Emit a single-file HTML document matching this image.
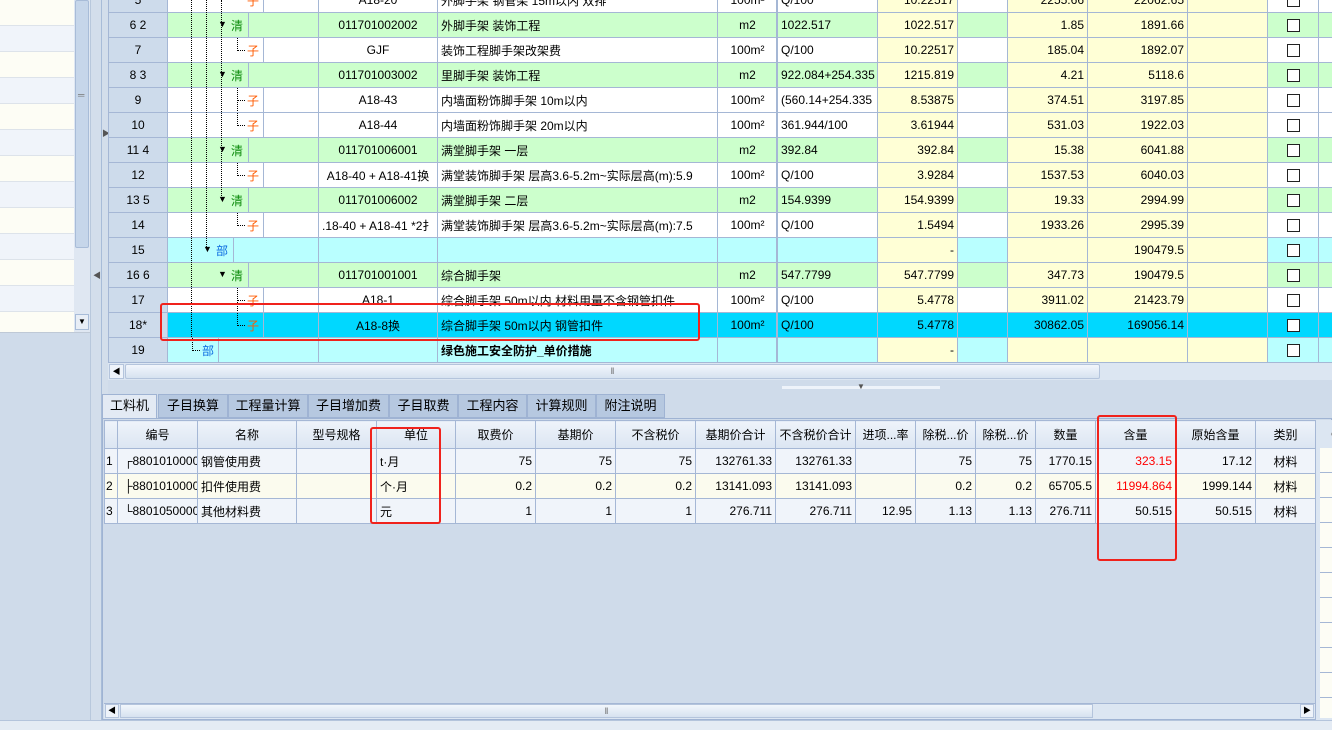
<!DOCTYPE html>
<html><head><meta charset="utf-8">
<style>
*{box-sizing:border-box;margin:0;padding:0}
body{width:1332px;height:730px;overflow:hidden;background:#cfdbea;font-family:"Liberation Sans","Noto Sans CJK SC",sans-serif;font-size:12px;color:#000;position:relative}
.abs{position:absolute}
table{border-collapse:collapse;table-layout:fixed}
td{padding:0 3px;border:1px solid #a5b7d5;height:25px;white-space:nowrap;overflow:hidden;font-size:12px}
#top{position:absolute;left:108px;top:-13px;width:1230px}
#top td.h{background:#cddbeb;text-align:center}
tr.g td{background:#ccffcc}
tr.w td{background:#fff}
tr.c td{background:#b9ffff}
tr.s td{background:#00d8ff}
tr td.y{background:#ffffd6}
tr.s td.y{background:#00d8ff}
td.r{text-align:right}
td.m{text-align:center}
td.t{position:relative;padding:0}
.dv{position:absolute;top:0;bottom:0;border-right:1px solid #a5b7d5}
.q{position:absolute;top:4px;color:#0a8a0a}
.z{position:absolute;top:4px;color:#ff5a00}
.b{position:absolute;top:4px;color:#0a6ae0}
.ar{position:absolute;top:6px;font-size:9px;color:#000}
.lk{position:absolute;top:0;height:13px;width:8px;border-left:1px dotted #000;border-bottom:1px dotted #000}
.cb{display:inline-block;width:13px;height:13px;border:1px solid #222;background:#fff;vertical-align:middle}
.vl{position:absolute;border-left:1px dotted #000;width:0}
#bot{position:absolute;left:104px;top:420px;width:1211px}
#bot td{background:#f0f4fa;height:25px}
#bot tr.hd td{height:28px;background:linear-gradient(#eef3fa,#dbe5f2);text-align:center}
#bot tr.k td{background:#fbfbee}
.tab{position:absolute;top:394px;height:24px;background:#b6c8e0;border:1px solid #9fb3d3;text-align:center;line-height:22px;font-size:13px}
.red{position:absolute;border:2px solid #f0221c;border-radius:3px}
</style></head><body>
<div class="abs" style="left:0;top:0;width:74px;height:332px;background:repeating-linear-gradient(#fdfdf5 0 25px,#dde3ea 25px 26px,#f0f4fa 26px 51px,#dde3ea 51px 52px)"></div>
<div class="abs" style="left:74px;top:0;width:16px;height:332px;background:#dfe7f2"></div>
<div class="abs" style="left:75px;top:0;width:14px;height:248px;background:#c6d6ea;border:1px solid #a8bcd8;border-radius:2px"></div>
<div class="abs" style="left:78px;top:90px;font-size:9px;color:#777">═</div>
<div class="abs" style="left:75px;top:314px;width:14px;height:16px;background:#e8eef6;border:1px solid #a8bcd8;font-size:8px;text-align:center;line-height:14px">▼</div>
<div class="abs" style="left:0;top:332px;width:90px;height:390px;background:#cfdbea;border-top:1px solid #bfc9d6"></div>
<div class="abs" style="left:90px;top:0;width:18px;height:720px;background:#d3deeb;border-left:1px solid #b8c8dc"></div>
<div class="abs" style="left:101px;top:0;width:1px;height:720px;background:#a8bcd8"></div>
<div class="abs" style="left:102px;top:128px;font-size:8px;color:#555">▶</div>
<div class="abs" style="left:93px;top:270px;font-size:8px;color:#555">◀</div>

<table id="top">
<colgroup><col style="width:59px"><col style="width:151px"><col style="width:119px"><col style="width:280px"><col style="width:60px"><col style="width:100px"><col style="width:80px"><col style="width:50px"><col style="width:80px"><col style="width:100px"><col style="width:80px"><col style="width:51px"><col style="width:20px"></colgroup>
<tr class="w"><td class="h">5</td><td class="t"><div class="dv" style="left:0;width:96px"></div><span class="z" style="left:79px">子</span></td><td class="m">A18-20</td><td>外脚手架 钢管架 15m以内 双排</td><td class="m">100m²</td><td>Q/100</td><td class="r y">10.22517</td><td></td><td class="r y">2255.66</td><td class="r y">22062.65</td><td class="y"></td><td class="m"><span class="cb"></span></td><td></td></tr>
<tr class="g"><td class="h">6 2</td><td class="t"><div class="dv" style="left:0;width:81px"></div><span class="ar" style="left:50px">▼</span><span class="q" style="left:63px">清</span></td><td class="m">011701002002</td><td>外脚手架 装饰工程</td><td class="m">m2</td><td>1022.517</td><td class="r y">1022.517</td><td></td><td class="r y">1.85</td><td class="r y">1891.66</td><td class="y"></td><td class="m"><span class="cb"></span></td><td></td></tr>
<tr class="w"><td class="h">7</td><td class="t"><div class="dv" style="left:0;width:96px"></div><div class="lk" style="left:69px"></div><span class="z" style="left:79px">子</span></td><td class="m">GJF</td><td>装饰工程脚手架改架费</td><td class="m">100m²</td><td>Q/100</td><td class="r y">10.22517</td><td></td><td class="r y">185.04</td><td class="r y">1892.07</td><td class="y"></td><td class="m"><span class="cb"></span></td><td></td></tr>
<tr class="g"><td class="h">8 3</td><td class="t"><div class="dv" style="left:0;width:81px"></div><span class="ar" style="left:50px">▼</span><span class="q" style="left:63px">清</span></td><td class="m">011701003002</td><td>里脚手架 装饰工程</td><td class="m">m2</td><td>922.084+254.335</td><td class="r y">1215.819</td><td></td><td class="r y">4.21</td><td class="r y">5118.6</td><td class="y"></td><td class="m"><span class="cb"></span></td><td></td></tr>
<tr class="w"><td class="h">9</td><td class="t"><div class="dv" style="left:0;width:96px"></div><div class="lk" style="left:69px;height:25px;border-bottom:none"></div><div class="lk" style="left:69px;border-left:none"></div><span class="z" style="left:79px">子</span></td><td class="m">A18-43</td><td>内墙面粉饰脚手架 10m以内</td><td class="m">100m²</td><td>(560.14+254.335</td><td class="r y">8.53875</td><td></td><td class="r y">374.51</td><td class="r y">3197.85</td><td class="y"></td><td class="m"><span class="cb"></span></td><td></td></tr>
<tr class="w"><td class="h">10</td><td class="t"><div class="dv" style="left:0;width:96px"></div><div class="lk" style="left:69px"></div><span class="z" style="left:79px">子</span></td><td class="m">A18-44</td><td>内墙面粉饰脚手架 20m以内</td><td class="m">100m²</td><td>361.944/100</td><td class="r y">3.61944</td><td></td><td class="r y">531.03</td><td class="r y">1922.03</td><td class="y"></td><td class="m"><span class="cb"></span></td><td></td></tr>
<tr class="g"><td class="h">11 4</td><td class="t"><div class="dv" style="left:0;width:81px"></div><span class="ar" style="left:50px">▼</span><span class="q" style="left:63px">清</span></td><td class="m">011701006001</td><td>满堂脚手架 一层</td><td class="m">m2</td><td>392.84</td><td class="r y">392.84</td><td></td><td class="r y">15.38</td><td class="r y">6041.88</td><td class="y"></td><td class="m"><span class="cb"></span></td><td></td></tr>
<tr class="w"><td class="h">12</td><td class="t"><div class="dv" style="left:0;width:96px"></div><div class="lk" style="left:69px"></div><span class="z" style="left:79px">子</span></td><td class="m">A18-40 + A18-41换</td><td>满堂装饰脚手架 层高3.6-5.2m~实际层高(m):5.9</td><td class="m">100m²</td><td>Q/100</td><td class="r y">3.9284</td><td></td><td class="r y">1537.53</td><td class="r y">6040.03</td><td class="y"></td><td class="m"><span class="cb"></span></td><td></td></tr>
<tr class="g"><td class="h">13 5</td><td class="t"><div class="dv" style="left:0;width:81px"></div><span class="ar" style="left:50px">▼</span><span class="q" style="left:63px">清</span></td><td class="m">011701006002</td><td>满堂脚手架 二层</td><td class="m">m2</td><td>154.9399</td><td class="r y">154.9399</td><td></td><td class="r y">19.33</td><td class="r y">2994.99</td><td class="y"></td><td class="m"><span class="cb"></span></td><td></td></tr>
<tr class="w"><td class="h">14</td><td class="t"><div class="dv" style="left:0;width:96px"></div><div class="lk" style="left:69px"></div><span class="z" style="left:79px">子</span></td><td class="m">.18-40 + A18-41 *2扌</td><td>满堂装饰脚手架 层高3.6-5.2m~实际层高(m):7.5</td><td class="m">100m²</td><td>Q/100</td><td class="r y">1.5494</td><td></td><td class="r y">1933.26</td><td class="r y">2995.39</td><td class="y"></td><td class="m"><span class="cb"></span></td><td></td></tr>
<tr class="c"><td class="h">15</td><td class="t"><div class="dv" style="left:0;width:66px"></div><span class="ar" style="left:35px">▼</span><span class="b" style="left:48px">部</span></td><td></td><td></td><td></td><td></td><td class="r y">-</td><td></td><td class="y"></td><td class="r y">190479.5</td><td class="y"></td><td class="m"><span class="cb"></span></td><td></td></tr>
<tr class="g"><td class="h">16 6</td><td class="t"><div class="dv" style="left:0;width:81px"></div><span class="ar" style="left:50px">▼</span><span class="q" style="left:63px">清</span></td><td class="m">011701001001</td><td>综合脚手架</td><td class="m">m2</td><td>547.7799</td><td class="r y">547.7799</td><td></td><td class="r y">347.73</td><td class="r y">190479.5</td><td class="y"></td><td class="m"><span class="cb"></span></td><td></td></tr>
<tr class="w"><td class="h">17</td><td class="t"><div class="dv" style="left:0;width:96px"></div><div class="lk" style="left:69px;height:25px;border-bottom:none"></div><div class="lk" style="left:69px;border-left:none"></div><span class="z" style="left:79px">子</span></td><td class="m">A18-1</td><td>综合脚手架 50m以内 材料用量不含钢管扣件</td><td class="m">100m²</td><td>Q/100</td><td class="r y">5.4778</td><td></td><td class="r y">3911.02</td><td class="r y">21423.79</td><td class="y"></td><td class="m"><span class="cb"></span></td><td></td></tr>
<tr class="s"><td class="h">18*</td><td class="t"><div class="dv" style="left:0;width:96px"></div><div class="lk" style="left:69px"></div><span class="z" style="left:79px">子</span></td><td class="m">A18-8换</td><td>综合脚手架 50m以内 钢管扣件</td><td class="m">100m²</td><td>Q/100</td><td class="r y">5.4778</td><td></td><td class="r y">30862.05</td><td class="r y">169056.14</td><td class="y"></td><td class="m"><span class="cb"></span></td><td></td></tr>
<tr class="c"><td class="h">19</td><td class="t"><div class="dv" style="left:0;width:51px"></div><div class="lk" style="left:24px"></div><span class="b" style="left:34px">部</span></td><td></td><td style="font-weight:bold">绿色施工安全防护_单价措施</td><td></td><td></td><td class="r y">-</td><td></td><td class="y"></td><td class="y"></td><td class="y"></td><td class="m"><span class="cb"></span></td><td></td></tr>
</table>
<div class="vl" style="left:191px;top:0;height:337px"></div>
<div class="vl" style="left:206px;top:0;height:249px"></div>
<div class="vl" style="left:221px;top:0;height:200px"></div>
<div class="abs" style="left:776px;top:0;width:2px;height:362px;background:#a5b7d5"></div>
<div class="abs" style="left:108px;top:362px;width:1224px;height:18px;background:#dce6f2;border-top:1px solid #a5b7d5"></div>
<div class="abs" style="left:109px;top:364px;width:15px;height:15px;background:#eef3fa;border:1px solid #b4c4dc;font-size:8px;text-align:center;line-height:13px">◀</div>
<div class="abs" style="left:125px;top:364px;width:975px;height:15px;background:linear-gradient(#f2f6fc,#d6e2f0);border:1px solid #b4c4dc;border-radius:2px;text-align:center;font-size:9px;line-height:13px;color:#666">‖</div>
<div class="abs" style="left:782px;top:386px;width:158px;height:3px;background:#eef3fa"></div>
<div class="abs" style="left:857px;top:382px;font-size:8px;color:#555">▼</div>
<div class="tab" style="left:102px;width:55px;background:#e3eaf4;border-bottom:none">工料机</div>
<div class="tab" style="left:158px;width:70px">子目换算</div>
<div class="tab" style="left:228px;width:80px">工程量计算</div>
<div class="tab" style="left:308px;width:81px">子目增加费</div>
<div class="tab" style="left:389px;width:69px">子目取费</div>
<div class="tab" style="left:458px;width:69px">工程内容</div>
<div class="tab" style="left:527px;width:69px">计算规则</div>
<div class="tab" style="left:596px;width:69px">附注说明</div>
<div class="abs" style="left:102px;top:418px;width:1230px;height:302px;border:1px solid #9fb3d3;background:#cfdbea"></div>
<table id="bot">
<colgroup><col style="width:13px"><col style="width:80px"><col style="width:99px"><col style="width:80px"><col style="width:79px"><col style="width:80px"><col style="width:80px"><col style="width:80px"><col style="width:80px"><col style="width:80px"><col style="width:60px"><col style="width:60px"><col style="width:60px"><col style="width:60px"><col style="width:80px"><col style="width:80px"><col style="width:60px"></colgroup>
<tr class="hd"><td></td><td>编号</td><td>名称</td><td>型号规格</td><td>单位</td><td>取费价</td><td>基期价</td><td>不含税价</td><td>基期价合计</td><td>不含税价合计</td><td style="padding:0">进项...率</td><td style="padding:0">除税...价</td><td style="padding:0">除税...价</td><td>数量</td><td>含量</td><td>原始含量</td><td>类别</td></tr>
<tr><td style="padding:0 1px">1</td><td style="padding-left:6px">┌8801010000(</td><td>钢管使用费</td><td></td><td>t·月</td><td class="r">75</td><td class="r">75</td><td class="r">75</td><td class="r">132761.33</td><td class="r">132761.33</td><td></td><td class="r">75</td><td class="r">75</td><td class="r">1770.15</td><td class="r" style="color:#f00">323.15</td><td class="r">17.12</td><td class="m">材料</td></tr>
<tr class="k"><td style="padding:0 1px">2</td><td style="padding-left:6px">├8801010000(</td><td>扣件使用费</td><td></td><td>个·月</td><td class="r">0.2</td><td class="r">0.2</td><td class="r">0.2</td><td class="r">13141.093</td><td class="r">13141.093</td><td></td><td class="r">0.2</td><td class="r">0.2</td><td class="r">65705.5</td><td class="r" style="color:#f00">11994.864</td><td class="r">1999.144</td><td class="m">材料</td></tr>
<tr><td style="padding:0 1px">3</td><td style="padding-left:6px">└8801050000(</td><td>其他材料费</td><td></td><td>元</td><td class="r">1</td><td class="r">1</td><td class="r">1</td><td class="r">276.711</td><td class="r">276.711</td><td class="r">12.95</td><td class="r">1.13</td><td class="r">1.13</td><td class="r">276.711</td><td class="r">50.515</td><td class="r">50.515</td><td class="m">材料</td></tr>
</table>
<div class="abs" style="left:1315px;top:420px;width:17px;height:300px;background:#dce6f2;border-left:1px solid #a5b7d5"></div>
<div class="abs" style="left:1320px;top:448px;width:12px;height:270px;background:repeating-linear-gradient(#fdfdf5 0 24px,#a5b7d5 24px 25px)"></div>
<div class="abs" style="left:1325px;top:426px;font-size:10px;color:#888">〈</div>
<div class="abs" style="left:104px;top:703px;width:1211px;height:16px;background:#dce6f2;border-top:1px solid #a5b7d5"></div>
<div class="abs" style="left:105px;top:704px;width:14px;height:14px;background:#eef3fa;border:1px solid #b4c4dc;font-size:8px;text-align:center;line-height:12px">◀</div>
<div class="abs" style="left:120px;top:704px;width:973px;height:14px;background:linear-gradient(#f2f6fc,#d6e2f0);border:1px solid #b4c4dc;text-align:center;font-size:9px;line-height:12px;color:#666">‖</div>
<div class="abs" style="left:1300px;top:704px;width:14px;height:14px;background:#eef3fa;border:1px solid #b4c4dc;font-size:8px;text-align:center;line-height:12px">▶</div>
<div class="abs" style="left:0;top:720px;width:1332px;height:10px;background:#e4ebf4;border-top:1px solid #b4c4dc"></div>
<div class="red" style="left:160px;top:303px;width:540px;height:38px"></div>
<div class="red" style="left:370px;top:427px;width:71px;height:97px"></div>
<div class="red" style="left:1097px;top:415px;width:80px;height:146px"></div>
</body></html>
